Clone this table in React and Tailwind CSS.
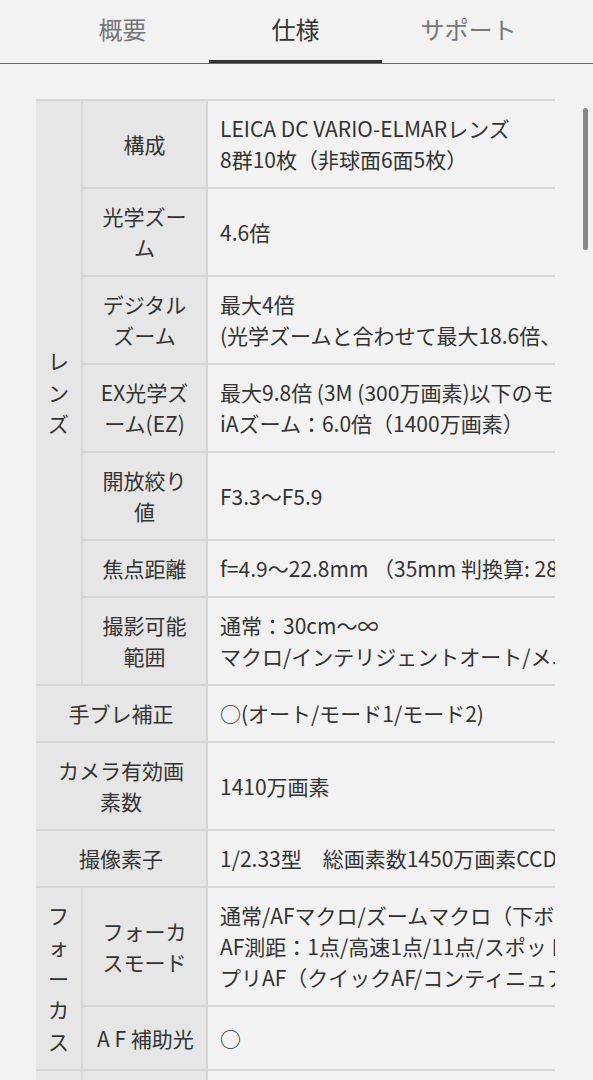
import React from "react";

const L = "bg-[#e6e6e6] text-center text-[#333] px-[14px] py-[12px] border-2 border-[#d6d6d6]";
const V = "bg-[#f2f2f2] text-left text-[#333] pl-[12px] pr-[8px] py-[12px] border-2 border-[#d6d6d6] whitespace-nowrap";
const G = "bg-[#e6e6e6] text-center text-[#333] p-0 border-2 border-l-0 border-[#d6d6d6] align-middle";

function Stack({ text }) {
  return (
    <div className="flex flex-col items-center">
      {Array.from(text).map((c, i) => (
        <span key={i} className="leading-[31.5px]">{c}</span>
      ))}
    </div>
  );
}

function Lines({ lines }) {
  return (
    <>
      {lines.map((l, i) => (
        <div key={i}>{l}</div>
      ))}
    </>
  );
}

export default function App() {
  return (
    <div className="min-h-screen bg-[#f2f2f2] font-['Noto_Sans_CJK_JP','Noto_Sans',sans-serif] text-[21px] leading-[31px]">
      <div className="flex h-[64px] border-b border-[#666] pl-[36px]">
        <div className="w-[173px] h-[63px] flex items-center justify-center pb-[6px] text-[24px] text-[#777]">概要</div>
        <div className="w-[173px] h-[63px] flex items-center justify-center pb-[3px] text-[24px] text-[#333] border-b-[3px] border-[#333]">仕様</div>
        <div className="w-[173px] h-[63px] flex items-center justify-center pb-[6px] text-[24px] text-[#777]">サポート</div>
      </div>
      <div className="relative pt-[35px]">
        <div className="ml-[36px] w-[519px] overflow-hidden">
          <table className="table-fixed border-collapse w-[760px] border-t-2 border-[#d6d6d6]">
            <colgroup>
              <col className="w-[46px]" />
              <col className="w-[125px]" />
              <col />
            </colgroup>
            <tbody>
              <tr>
                <td rowSpan={7} className={G}><Stack text="レンズ" /></td>
                <td className={L}>構成</td>
                <td className={V}><Lines lines={["LEICA DC VARIO-ELMARレンズ", "8群10枚（非球面6面5枚）"]} /></td>
              </tr>
              <tr>
                <td className={L}>光学ズーム</td>
                <td className={V}>4.6倍</td>
              </tr>
              <tr>
                <td className={L}>デジタルズーム</td>
                <td className={V}><Lines lines={["最大4倍", "(光学ズームと合わせて最大18.6倍、EX光学ズーム併用時最大39.2倍)"]} /></td>
              </tr>
              <tr>
                <td className={L}>EX光学ズーム(EZ)</td>
                <td className={V}><Lines lines={["最大9.8倍 (3M (300万画素)以下のモード時)", "iAズーム：6.0倍（1400万画素）"]} /></td>
              </tr>
              <tr>
                <td className={L}>開放絞り値</td>
                <td className={V}>F3.3〜F5.9</td>
              </tr>
              <tr>
                <td className={L}>焦点距離</td>
                <td className={V}>f=4.9〜22.8mm （35mm 判換算: 28〜128mm）</td>
              </tr>
              <tr>
                <td className={L}>撮影可能範囲</td>
                <td className={V}><Lines lines={["通常：30cm〜∞", "マクロ/インテリジェントオート/メニュー：5cm〜∞"]} /></td>
              </tr>
              <tr>
                <td colSpan={2} className={L + " border-l-0"}>手ブレ補正</td>
                <td className={V}>○(オート/モード1/モード2)</td>
              </tr>
              <tr>
                <td colSpan={2} className={L + " border-l-0"}>カメラ有効画素数</td>
                <td className={V}>1410万画素</td>
              </tr>
              <tr>
                <td colSpan={2} className={L + " border-l-0"}>撮像素子</td>
                <td className={V}>1/2.33型　総画素数1450万画素CCD</td>
              </tr>
              <tr>
                <td rowSpan={2} className={G}><Stack text="フォーカス" /></td>
                <td className={L}>フォーカスモード</td>
                <td className={V}><Lines lines={["通常/AFマクロ/ズームマクロ（下ボタン）", "AF測距：1点/高速1点/11点/スポット/顔認識", "プリAF（クイックAF/コンティニュアスAF）"]} /></td>
              </tr>
              <tr className="h-[64px]">
                <td className={L + " whitespace-nowrap px-0"}>A F 補助光</td>
                <td className={V}>○</td>
              </tr>
              <tr>
                <td rowSpan={3} className={G}><Stack text="露出" /></td>
                <td className={L}>測光方式</td>
                <td className={V}>インテリジェント多分割</td>
              </tr>
              <tr>
                <td className={L}>露出補正</td>
                <td className={V}>1/3EVステップ ±2EV</td>
              </tr>
              <tr>
                <td className={L}>ISO感度</td>
                <td className={V}>オート/80/100/200/400/800/1600</td>
              </tr>
            </tbody>
          </table>
        </div>
        <div className="absolute left-[583px] top-[44px] w-[5px] h-[142px] rounded-full bg-[#888]" />
      </div>
    </div>
  );
}
